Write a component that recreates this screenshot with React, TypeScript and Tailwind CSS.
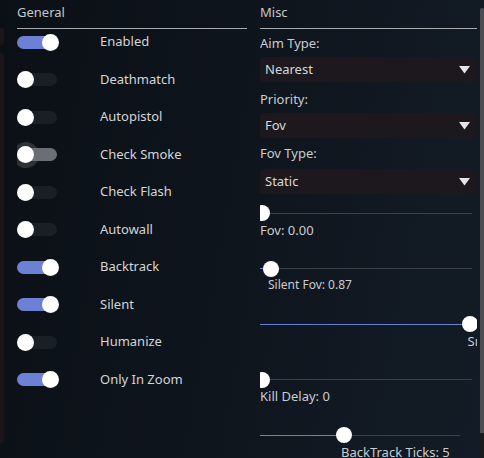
import React from "react";

type ToggleItem = { label: string; on: boolean; hover?: boolean };

const toggles: ToggleItem[] = [
  { label: "Enabled", on: true },
  { label: "Deathmatch", on: false },
  { label: "Autopistol", on: false },
  { label: "Check Smoke", on: false, hover: true },
  { label: "Check Flash", on: false },
  { label: "Autowall", on: false },
  { label: "Backtrack", on: true },
  { label: "Silent", on: true },
  { label: "Humanize", on: false },
  { label: "Only In Zoom", on: true },
];

type SliderItem = { label: string; knob: number; width: number; small?: boolean };

// knob: centre of the handle in px from the slider's left edge
const sliders: SliderItem[] = [
  { label: "Fov: 0.00", knob: 2, width: 212 },
  { label: "Silent Fov: 0.87", knob: 10.5, width: 212, small: true },
  { label: "Smooth: 1.00", knob: 210, width: 216 },
  { label: "Kill Delay: 0", knob: 2, width: 212 },
  { label: "BackTrack Ticks: 5", knob: 83.5, width: 200 },
];

const font = { fontFamily: '"Noto Sans", "Open Sans", sans-serif' };

function Toggle({ on, hover }: { on: boolean; hover?: boolean }) {
  const track = on ? "bg-[#6c80d6]" : hover ? "bg-[#6b6e74]" : "bg-[#1a1f26]";
  return (
    <div className="relative w-[43px] h-[26px] overflow-hidden flex items-center">
      {hover && (
        <div className="absolute left-[-4.5px] top-0 w-[26px] h-[26px] rounded-full bg-[#3a3d43]/75" />
      )}
      <div className={`relative w-[40px] h-[13px] rounded-full ${track}`} />
      <div
        className={`absolute top-[4.5px] w-[17px] h-[17px] rounded-full bg-white ${
          on ? "left-[24.5px]" : "left-0"
        }`}
      />
    </div>
  );
}

function Header({ title }: { title: string }) {
  return (
    <div className="h-[29px] border-b border-[#a7aaae] pt-[3px] text-[13px] leading-[18px] text-[#c3c7cc]">
      {title}
    </div>
  );
}

function Select({ value, className }: { value: string; className: string }) {
  return (
    <div
      className={`h-[25px] rounded-[4px] bg-[#1d181d] flex items-center justify-between pl-[5px] pr-[7px] text-[13px] text-[#d6d8db] ${className}`}
    >
      <span className="pt-px">{value}</span>
      <svg width="11" height="8" viewBox="0 0 11 8">
        <polygon points="0,0 11,0 5.5,7.5" fill="#e4e5e7" />
      </svg>
    </div>
  );
}

function Slider({ item }: { item: SliderItem }) {
  const filled = item.knob - 2;
  return (
    <div className="relative h-[55.6px]">
      <div
        className="absolute top-[7.5px] left-0 h-px bg-[#3c4148]"
        style={{ width: item.width }}
      />
      <div
        className="absolute top-[7.5px] left-0 h-px bg-[#6a7fd6]"
        style={{ width: Math.max(filled, 0) }}
      />
      <div
        className="absolute top-0 w-[16px] h-[16px] rounded-full bg-white"
        style={{ left: item.knob - 8 }}
      />
      <div
        className={`absolute whitespace-nowrap text-[#c9ccd0] ${
          item.small ? "top-[16px] text-[12px] leading-[16px]" : "top-[15.5px] text-[13px] leading-[18px]"
        }`}
        style={{ left: Math.max(item.knob - 2.5, 0) }}
      >
        {item.label}
      </div>
    </div>
  );
}

export default function App() {
  return (
    <div
      className="relative w-[484px] h-[458px] overflow-hidden flex bg-[linear-gradient(100deg,#0b1016,#0f151d_50%,#131c26)]"
      style={font}
    >
      {/* edge of the neighbouring panel */}
      <div className="w-[4px] flex-none flex flex-col">
        <div className="mt-[28px] h-[17px] rounded-r-[3px] bg-[#1b1519]" />
        <div className="mt-[8px] h-[390px] rounded-r-[3px] bg-[#1b1519]" />
      </div>

      {/* General */}
      <div className="ml-[13px] w-[230px] flex-none">
        <Header title="General" />
        <div className="flex flex-col gap-[11.5px]">
          {toggles.map((t) => (
            <div key={t.label} className="h-[26px] flex items-center">
              <div className="w-[83px] flex-none">
                <Toggle on={t.on} hover={t.hover} />
              </div>
              <span className="text-[13px] text-[#d3d5d8]">{t.label}</span>
            </div>
          ))}
        </div>
      </div>

      {/* Misc */}
      <div className="ml-[13px] w-[217px] flex-none h-full overflow-hidden">
        <Header title="Misc" />
        <div className="text-[13px] leading-[18px] text-[#c9ccd0] mt-[5px]">Aim Type:</div>
        <Select value="Nearest" className="mt-[5px]" />
        <div className="text-[13px] leading-[18px] text-[#c9ccd0] mt-[8px]">Priority:</div>
        <Select value="Fov" className="mt-[5px]" />
        <div className="text-[13px] leading-[18px] text-[#c9ccd0] mt-[6px]">Fov Type:</div>
        <Select value="Static" className="mt-[7px]" />
        <div className="mt-[11px]">
          {sliders.map((s) => (
            <Slider key={s.label} item={s} />
          ))}
        </div>
      </div>

      {/* scrollbar */}
      <div className="ml-[3px] w-[4px] flex-none flex flex-col">
        <div className="mt-[8px] h-[425px] rounded-t-[2px] bg-[#4b4d52]" />
        <div className="flex-1 bg-[#1a1b1f]" />
      </div>
    </div>
  );
}
